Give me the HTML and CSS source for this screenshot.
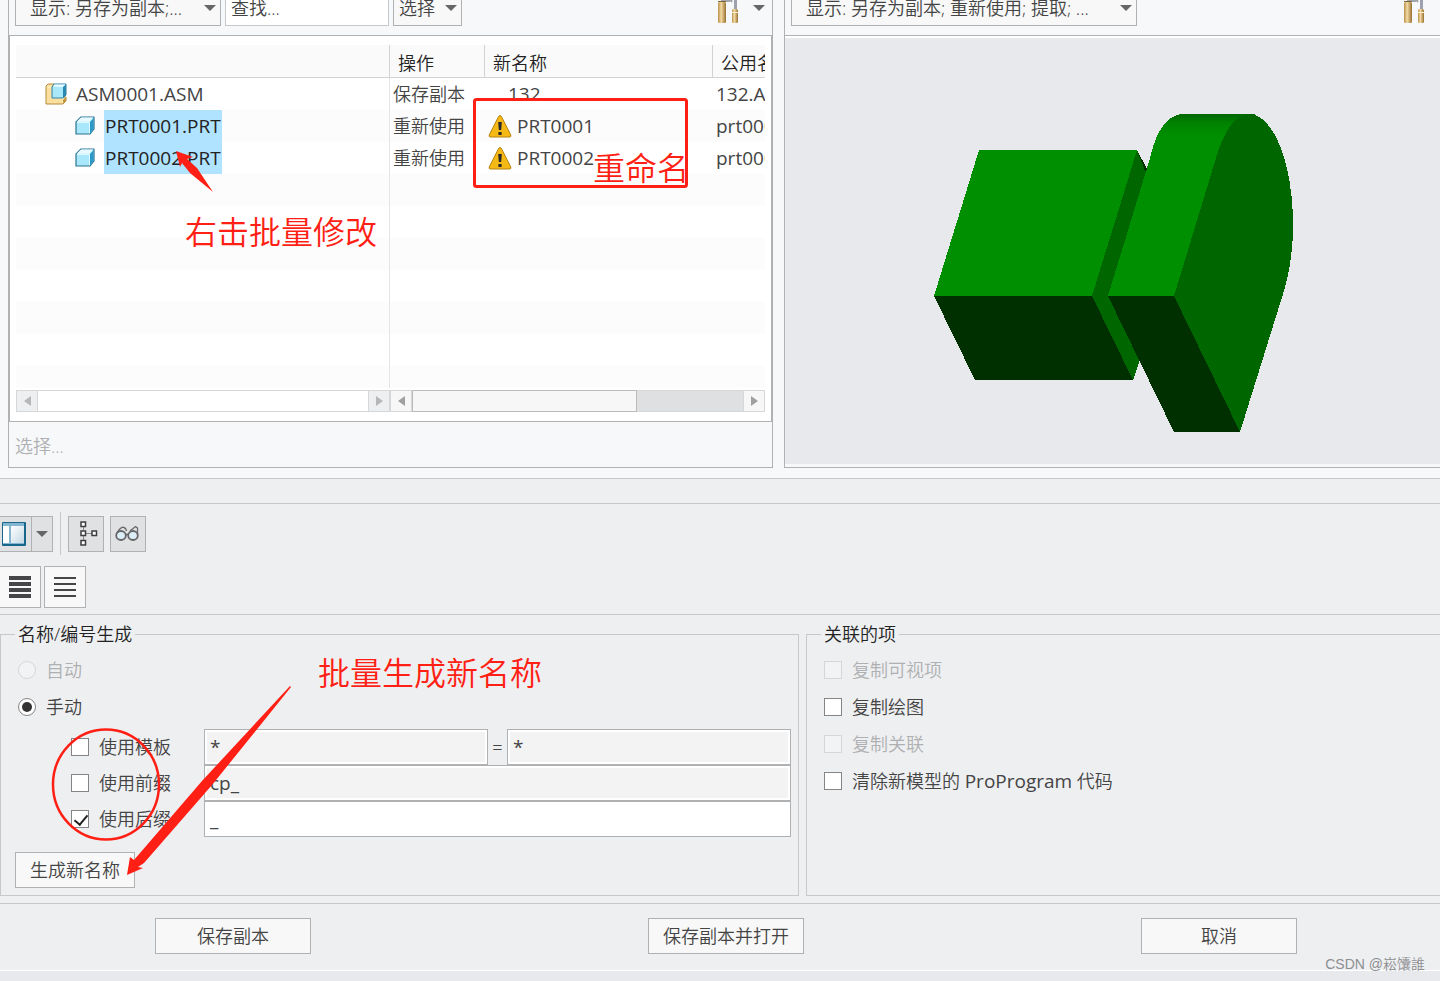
FILE: index.html
```html
<!DOCTYPE html>
<html lang="zh">
<head>
  <meta charset="UTF-8">
  <title>保存副本</title>
  <link rel="stylesheet" href="styles.css">
</head>
<body>
  <svg class="defs" width="0" height="0">
    <defs>
      <linearGradient id="wood" x1="0" x2="1" y1="0" y2="0">
        <stop offset="0" stop-color="#b98f4a"/><stop offset=".4" stop-color="#f3dba4"/><stop offset="1" stop-color="#99702f"/>
      </linearGradient>
      <linearGradient id="pane" x1="0" x2="1" y1="0" y2="1">
        <stop offset="0" stop-color="#fff"/><stop offset="1" stop-color="#c3d8e3"/>
      </linearGradient>
      <linearGradient id="round" x1="0" x2="0" y1="0" y2="1">
        <stop offset="0" stop-color="#006600"/><stop offset=".2" stop-color="#008200"/><stop offset=".5" stop-color="#008f00"/>
      </linearGradient>
      <symbol id="tools" viewBox="0 0 24 34">
        <path d="M0 6Q4 0 10 3L14 5V11H5V8Z" fill="#a4a6ad"/>
        <rect x="2" y="11" width="8" height="21" rx="1.500" fill="url(#wood)"/>
        <path d="M2 10.500h8" stroke="#7d6335"/>
        <path d="M18 0h3v20h-3z" fill="#9da1ad"/><path d="M14 8l2 3" stroke="#9b9da4" stroke-width="2"/>
        <rect x="16" y="18" width="6" height="14" rx="1.500" fill="url(#wood)"/>
        <path d="M16 21.500h6" stroke="#fff0c8"/>
      </symbol>
      <symbol id="part" viewBox="0 0 20 20">
        <path d="M1 6L6 1H19V13L15 18H1Z" fill="#a9e7fa" stroke="#2b7390" stroke-width="1.200" stroke-linejoin="round"/>
        <path d="M1.600 5.700L6 1.600H18.400L14.500 5.700Z" fill="#e7faff"/>
        <path d="M15 6L18.500 2V13L15 17.500Z" fill="#2b9ac8"/>
        <path d="M2 6.500H14.500V17" fill="none" stroke="#dff8ff"/>
      </symbol>
      <symbol id="asm" viewBox="0 0 22 22">
        <path d="M1 3L3 1H9V14H21V18L18 21H1Z" fill="#fbdf9f" stroke="#b58a3e" stroke-linejoin="round"/>
        <path d="M2 4H7V15H18V20" fill="none" stroke="#fff3cf"/>
        <path d="M18 20V17L21 14V18Z" fill="#c29440"/>
        <path d="M7 4L9 1H21V12L18 15H7Z" fill="#a9e7fa" stroke="#2f7e9e"/>
        <path d="M8 3.600L9.500 1.600H20.500L18 4Z" fill="#ecfbff"/>
        <path d="M18 4L21 1.500V12L18 15Z" fill="#2788b4"/>
      </symbol>
      <symbol id="warn" viewBox="0 0 24 24">
        <path d="M12 1.500Q13 1.500 13.700 3L22.800 21Q23.500 23 21.500 23H2.500Q.5 23 1.200 21L10.300 3Q11 1.500 12 1.500Z" fill="#f5b916" stroke="#b78313"/>
        <path d="M10.200 8h3.600l-.6 8h-2.400z" fill="#29292b"/><rect x="10.400" y="18" width="3.200" height="3" fill="#29292b"/>
      </symbol>
      <symbol id="left" viewBox="0 0 7 10"><path d="M7 0V10L0 5Z" fill="currentColor"/></symbol>
      <symbol id="right" viewBox="0 0 7 10"><path d="M0 0V10L7 5Z" fill="currentColor"/></symbol>
    </defs>
  </svg>

  <div class="page">
    <main class="panels">
      <section class="panel">
        <div class="bar">
          <div class="select select-show"><select aria-label="显示"><option>显示: 另存为副本;...</option></select></div>
          <input class="find" type="text" placeholder="查找..." aria-label="查找">
          <div class="select select-pick"><select aria-label="选择"><option>选择</option></select></div>
          <button class="tools tools-menu" aria-label="工具"><svg width="24" height="34"><use href="#tools"/></svg><i class="caret"></i></button>
        </div>
        <div class="tree">
          <div class="grid">
            <table>
              <colgroup><col class="c-model"><col class="c-action"><col class="c-name"><col></colgroup>
              <thead>
                <tr><th></th><th>操作</th><th>新名称</th><th>公用名称</th></tr>
              </thead>
              <tbody>
                <tr>
                  <td><div class="node"><svg width="22" height="22"><use href="#asm"/></svg><span>ASM0001.ASM</span></div></td>
                  <td>保存副本</td><td><div class="name plain">132</div></td><td class="latin">132.ASM</td>
                </tr>
                <tr>
                  <td><div class="node child"><svg width="20" height="20"><use href="#part"/></svg><span class="picked">PRT0001.PRT</span></div></td>
                  <td>重新使用</td><td><div class="name"><svg width="24" height="24"><use href="#warn"/></svg>PRT0001</div></td><td class="latin">prt0001.prt</td>
                </tr>
                <tr>
                  <td><div class="node child"><svg width="20" height="20"><use href="#part"/></svg><span class="picked">PRT0002.PRT</span></div></td>
                  <td>重新使用</td><td><div class="name"><svg width="24" height="24"><use href="#warn"/></svg>PRT0002</div></td><td class="latin">prt0002.prt</td>
                </tr>
                <tr><td></td><td></td><td></td><td></td></tr>
                <tr><td></td><td></td><td></td><td></td></tr>
                <tr><td></td><td></td><td></td><td></td></tr>
                <tr><td></td><td></td><td></td><td></td></tr>
                <tr><td></td><td></td><td></td><td></td></tr>
                <tr><td></td><td></td><td></td><td></td></tr>
                <tr><td></td><td></td><td></td><td></td></tr>
              </tbody>
            </table>
          </div>
          <div class="scrolls">
            <div class="scroll scroll-off">
              <button aria-label="向左" disabled><svg width="7" height="10"><use href="#left"/></svg></button>
              <div class="track"></div>
              <button aria-label="向右" disabled><svg width="7" height="10"><use href="#right"/></svg></button>
            </div>
            <div class="scroll">
              <button aria-label="向左"><svg width="7" height="10"><use href="#left"/></svg></button>
              <div class="track"><div class="thumb"></div></div>
              <button aria-label="向右"><svg width="7" height="10"><use href="#right"/></svg></button>
            </div>
          </div>
        </div>
        <div class="status">选择...</div>
      </section>

      <section class="panel panel-view">
        <div class="bar">
          <div class="select select-wide"><select aria-label="显示"><option>显示: 另存为副本; 重新使用; 提取; ...</option></select></div>
          <button class="tools" aria-label="工具"><svg width="24" height="34"><use href="#tools"/></svg></button>
        </div>
        <div class="viewer">
          <svg width="360" height="319" viewBox="934 114 360 319" shape-rendering="crispEdges">
            <path d="M979 150H1137L1092 296H934Z" fill="#008f00"/>
            <path d="M934 296H1092L1133 380H975Z" fill="#003000"/>
            <path d="M1137 150L1160 196V300L1133 380L1092 296Z" fill="#006600"/>
            <path d="M1137 150L1147 169L1145 171Z" fill="#003000"/>
            <path d="M1108 296L1154 145Q1164 114 1184 114H1250L1230 200L1174 296Z" fill="#008f00"/>
            <path d="M1150 158Q1160 114 1184 114H1255L1215 158Z" fill="url(#round)"/>
            <path d="M1108 296H1174L1240 432H1174Z" fill="#003000"/>
            <path d="M1174 296L1216 158Q1229 114 1250 114C1275 116 1293 166 1293 225Q1293 262 1283 294L1240 432Z" fill="#006600"/>
          </svg>
        </div>
      </section>
    </main>

    <div class="strip"></div>

    <nav class="toolbars">
      <div class="row">
        <div class="combo">
          <button aria-label="布局">
            <svg width="24" height="24"><rect width="24" height="24" rx="1" fill="#17678d"/><rect x="1" y="1" width="21" height="21" fill="#84b7cf"/><rect x="1" y="4" width="6" height="17" fill="#fff"/><rect x="9" y="4" width="13" height="17" fill="url(#pane)"/></svg>
          </button>
          <button aria-label="布局选项"><i class="caret"></i></button>
        </div>
        <span class="sep"></span>
        <button class="tool" aria-label="层级">
          <svg width="18" height="26" fill="none" stroke="#3d3d3f" stroke-width="1.500"><path d="M3.500 6V9M3.500 15V19M6 12.500H12" stroke="#888" stroke-width="1"/><rect x="1" y="1" width="4.500" height="4.500" fill="#fff"/><rect x="1" y="10" width="4.500" height="4.500" fill="#fff"/><rect x="1" y="19.500" width="4.500" height="4.500" fill="#fff"/><rect x="12" y="10" width="4.500" height="4.500" fill="#fff"/></svg>
        </button>
        <button class="tool tool-preview" aria-label="预览">
          <svg width="24" height="18" fill="none" stroke="#66676a" stroke-width="1.800"><ellipse cx="6" cy="10.500" rx="4.800" ry="4.500" fill="#dceef7"/><ellipse cx="18" cy="10.500" rx="4.800" ry="4.500" fill="#dceef7"/><path d="M10.500 9.500H13.500M1.500 8.500Q6 1 9 2.500Q11 3 11.500 6M15 6L20.500 1.500L22.500 3V10" stroke-width="1.300"/></svg>
        </button>
      </div>
      <div class="row views">
        <button class="view" aria-label="紧凑列表"><svg width="22" height="24" fill="#464648"><path d="M0 1h22v4H0zM0 7h22v4H0zM0 13h22v4H0zM0 19h22v4H0z"/></svg></button>
        <button class="view" aria-label="列表"><svg width="22" height="24" stroke="#464648" stroke-width="2"><path d="M0 3h22M0 9h22M0 15h22M0 21h22"/></svg></button>
      </div>
    </nav>

    <form class="options" onsubmit="return false">
      <fieldset>
        <legend>名称/编号生成</legend>
        <label class="check off"><input type="radio" name="mode" disabled>自动</label>
        <label class="check"><input type="radio" name="mode" checked>手动</label>
        <div class="rules">
          <label class="check"><input type="checkbox">使用模板</label>
          <div class="pair">
            <input class="field" type="text" value="*" aria-label="模板原名称" readonly>
            <span>=</span>
            <input class="field" type="text" value="*" aria-label="模板新名称" readonly>
          </div>
          <label class="check"><input type="checkbox">使用前缀</label>
          <input class="field" type="text" value="cp_" aria-label="前缀" readonly>
          <label class="check"><input type="checkbox" checked>使用后缀</label>
          <input class="field" type="text" value="_" aria-label="后缀">
        </div>
        <button class="btn btn-generate">生成新名称</button>
      </fieldset>
      <fieldset class="related">
        <legend>关联的项</legend>
        <label class="check off"><input type="checkbox" disabled>复制可视项</label>
        <label class="check"><input type="checkbox">复制绘图</label>
        <label class="check off"><input type="checkbox" disabled>复制关联</label>
        <label class="check"><input type="checkbox"><span>清除新模型的 <span class="latin">ProProgram</span> 代码</span></label>
      </fieldset>
    </form>

    <footer class="actions">
      <button class="btn">保存副本</button>
      <button class="btn">保存副本并打开</button>
      <button class="btn">取消</button>
    </footer>

    <!-- red markup over the dialog -->
    <div class="notes">
      <svg width="800" height="900" fill="#ff1f14">
        <rect x="474.500" y="99.500" width="212" height="87" rx="2" fill="none" stroke="#ff1f14" stroke-width="3"/>
        <path d="M176 151L193 157L187 159L197 168L213 192L190 173L182 163L180 167Z"/>
        <ellipse cx="106" cy="784.500" rx="53" ry="55" fill="none" stroke="#ff1f14" stroke-width="2.500"/>
        <path d="M127 875L130 857L134 860L202 781L290 686L291 687L212 785L144 863L138 867L143 868Z"/>
      </svg>
      <span class="note note-rename">重命名</span>
      <span class="note note-batch">右击批量修改</span>
      <span class="note note-generate">批量生成新名称</span>
      <span class="watermark">CSDN @崧馕誰</span>
    </div>
  </div>
</body>
</html>
```
FILE: styles.css
```css
:root {
  --bg: #eeeff1;
  --panel: #f7f8fa;
  --line: #c6c8cb;
  --edge: #b0b1b3;
  --text: #444;
  --muted: #aeb0b2;
  --red: #ff1f14;
}
* { box-sizing: border-box; margin: 0; padding: 0; }
body {
  font-family: "Open Sans", "Noto Sans CJK SC", sans-serif;
  font-size: 18px;
  font-weight: 350;
  line-height: 24px;
  background: #e8e9ed;
  color: var(--text);
}
button, input, select { font: inherit; color: inherit; }
svg { display: block; flex: none; }
.defs { position: absolute; }
.page {
  position: relative;
  overflow: hidden;
}

/* upper panels */
.panels {
  display: grid;
  grid-template-columns: 765fr 656fr;
  gap: 11px;
  padding: 0 0 10px 8px;
  background: var(--panel);
}
.panel {
  display: flex;
  flex-direction: column;
  min-width: 0;
  border: 1px solid var(--edge);
  border-top: 0;
}
.panel-view { border-right: 0; }
.bar {
  display: flex;
  gap: 4px;
  height: 45px;
  margin-top: -10px;
  padding: 0 6px;
}
.select { position: relative; height: 36px; }
.select select {
  width: 100%;
  height: 100%;
  padding: 0 14px;
  border: 1px solid var(--edge);
  background: #f8f8f8;
  appearance: none;
}
.select::after, .caret {
  border: 6px solid transparent;
  border-top-color: #666;
  border-bottom: 0;
}
.select::after {
  content: "";
  position: absolute;
  top: 15px;
  right: 5px;
  pointer-events: none;
}
.select-show { width: 206px; }
.select-wide { width: 346px; }
.select-pick { width: 69px; }
.select-pick select { padding: 0 5px; }
.find {
  width: 164px;
  height: 36px;
  padding: 0 5px;
  border: 1px solid var(--line);
  background: #fff;
}
.find::placeholder { color: var(--text); opacity: 1; }
.tools {
  display: flex;
  align-items: center;
  gap: 13px;
  height: 36px;
  margin-left: auto;
  padding: 0 8px;
  border: 0;
  background: none;
}
.tools-menu { padding: 0 1px; }
.tree {
  padding: 9px 6px;
  border: 1px solid var(--edge);
  background: #fff;
}
.grid {
  height: 343px;
  overflow: hidden;
}
table {
  width: 100%;
  table-layout: fixed;
  border-collapse: separate;
  border-spacing: 0;
}
.c-model { width: 374px; }
.c-action { width: 95px; }
.c-name { width: 228px; }
th {
  height: 33px;
  padding: 4px 8px 0;
  border-bottom: 1px solid #d2d3d4;
  border-right: 1px solid #d2d3d4;
  background: #fafafa;
  color: #222;
  font-weight: inherit;
  text-align: left;
}
th, td {
  overflow: hidden;
  white-space: nowrap;
}
th:last-child { border-right: 0; }
td {
  height: 32px;
  padding: 0 3px;
}
td:first-child { border-right: 1px solid #e4e5e6; }
tr:nth-child(even) td { background: #fcfcfc; }
.latin, .name, .node {
  font-size: 19px;
  font-weight: 400;
}
.node {
  display: flex;
  align-items: center;
  gap: 8px;
  padding-left: 26px;
}
.child { gap: 9px; padding-left: 56px; }
.node span {
  padding: 0 1px;
  line-height: 32px;
}
.picked { background: #b0e3ff; color: #222; }
.name {
  display: flex;
  align-items: center;
  gap: 5px;
}
.plain { padding-left: 20px; }
.scrolls {
  display: grid;
  grid-template-columns: 374px 1fr;
  padding-top: 2px;
}
.scroll {
  display: flex;
  height: 22px;
  color: #a0a0a0;
}
.scroll button {
  display: flex;
  align-items: center;
  justify-content: center;
  width: 22px;
  border: 1px solid #d6d7d9;
  background: #f7f7f7;
}
.track {
  flex: 1;
  border: 1px solid #d6d7d9;
  border-width: 1px 0;
  background: #dfe0e2;
}
.thumb {
  width: 68%;
  height: 22px;
  margin-top: -1px;
  border: 1px solid #bbb;
  background: #f7f7f7;
}
.scroll-off { color: #b5b6b8; }
.scroll-off button { background: var(--bg); }
.scroll-off .track { background: #fff; }
.status {
  padding: 12px 6px 9px;
  color: var(--muted);
}
.viewer {
  display: flex;
  flex: 1;
  justify-content: center;
  margin-bottom: 3px;
  padding: 78px 0 0 2px;
  border-top: 1px solid var(--edge);
  background: #e8e9ed;
  box-shadow: inset 0 2px #fff;
}

/* toolbars */
.strip {
  height: 26px;
  border: 1px solid var(--line);
  border-width: 1px 0;
  background: var(--bg);
}
.toolbars {
  padding: 8px 0 6px;
  border-bottom: 1px solid var(--line);
  background: var(--bg);
}
.row {
  display: flex;
  align-items: center;
  gap: 6px;
}
.row button {
  display: flex;
  align-items: center;
  justify-content: center;
  border: 1px solid var(--edge);
  background: #e0e1e2;
}
.combo { display: flex; height: 36px; }
.combo button { width: 22px; }
.combo button:first-child {
  width: 31px;
  padding-right: 4px;
  border-width: 1px 0;
}
.sep {
  width: 1px;
  height: 43px;
  margin: 0 1px;
  background: var(--line);
}
.row .tool {
  width: 36px;
  height: 36px;
  padding-left: 6px;
}
.row .tool-preview { padding: 0 2px 0 0; }
.views {
  gap: 3px;
  margin: 11px 0 0 -1px;
}
.row .view {
  width: 42px;
  height: 42px;
  background: #f8f8f8;
}

/* options */
.options {
  display: grid;
  grid-template-columns: 799fr 634fr;
  gap: 7px;
  padding: 7px 0;
  background: var(--bg);
}
fieldset {
  min-width: 0;
  padding: 0 7px 7px 14px;
  border: 1px solid var(--line);
}
.related { border-right: 0; }
legend {
  padding: 0 3px;
  margin-bottom: 5px;
  color: #222;
}
.check {
  display: flex;
  align-items: center;
  gap: 10px;
  height: 37px;
  padding-left: 3px;
}
.off { color: var(--muted); }
.check input {
  position: relative;
  width: 18px;
  height: 18px;
  border: 1px solid #858585;
  background: #fff;
  appearance: none;
}
.check input:disabled {
  border-color: #d5d6d8;
  background: #f2f3f5;
}
.check input[type="radio"] { border-radius: 50%; }
.check input[type="radio"]:checked::after {
  content: "";
  position: absolute;
  inset: 3px;
  border-radius: 50%;
  background: #333;
}
.check input[type="checkbox"]:checked::after {
  content: "";
  position: absolute;
  top: 1px;
  left: 5px;
  width: 6px;
  height: 11px;
  border: solid #222;
  border-width: 0 2px 2px 0;
  transform: rotate(40deg);
}
.rules {
  display: grid;
  grid-template-columns: 136px 1fr;
  grid-auto-rows: 36px;
  margin: 4px 0 0 53px;
}
.rules .check { height: 36px; }
.pair {
  display: flex;
  align-items: center;
}
.pair span {
  width: 19px;
  text-align: center;
}
.field {
  flex: 1;
  width: 100%;
  min-width: 0;
  height: 36px;
  padding: 0 5px;
  border: 1px solid var(--edge);
  background: #fff;
  font-size: 19px;
  font-weight: 400;
}
.field:read-only {
  background: #f3f3f3;
  box-shadow: inset 0 0 0 2px #fff;
}
.btn {
  width: 156px;
  height: 36px;
  border: 1px solid var(--edge);
  background: #f8f8f8;
}
.btn-generate {
  width: 120px;
  margin-top: 15px;
}

/* bottom buttons */
.actions {
  display: flex;
  justify-content: space-between;
  padding: 14px 143px 16px 155px;
  border-top: 1px solid var(--line);
  border-bottom: 1px solid #fff;
  background: var(--bg);
}

/* markup layer */
.notes {
  position: absolute;
  inset: 0;
  pointer-events: none;
}
.note {
  position: absolute;
  color: var(--red);
  font-size: 32px;
  line-height: 40px;
  white-space: nowrap;
}
.note-rename { left: 593px; top: 148px; }
.note-batch { left: 185px; top: 212px; }
.note-generate { left: 318px; top: 653px; }
.watermark {
  position: absolute;
  right: 15px;
  bottom: -5px;
  color: #8c8e91;
  font-family: "Liberation Sans", "Noto Sans CJK SC", sans-serif;
  font-size: 14px;
}
```
